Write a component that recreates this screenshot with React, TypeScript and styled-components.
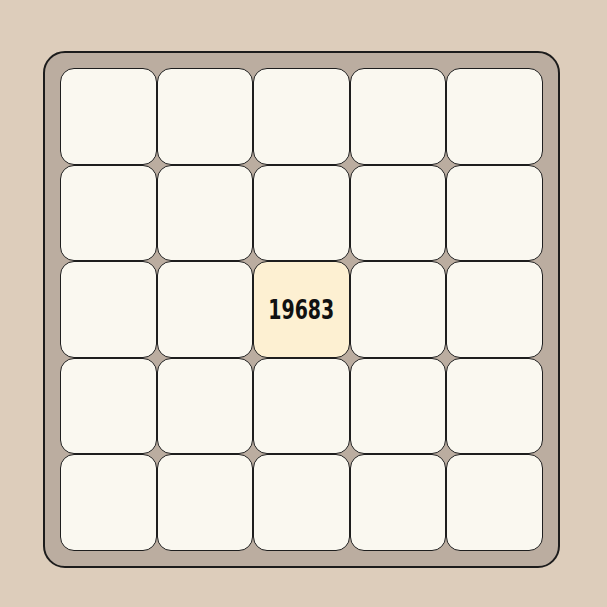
import React from "react";
import styled, { createGlobalStyle } from "styled-components";

const GlobalStyle = createGlobalStyle`
  html, body {
    margin: 0;
    padding: 0;
    background: #ddcdbb;
  }
`;

const Page = styled.div`
  width: 607px;
  height: 607px;
  padding: 51px 0 0 43px;
  box-sizing: border-box;
`;

const Board = styled.div`
  width: 517px;
  height: 517px;
  box-sizing: border-box;
  padding: 15px;
  background: #bbada0;
  border: 2px solid #1c1c1c;
  border-radius: 22px;
  display: grid;
  grid-template-columns: repeat(5, 1fr);
  grid-template-rows: repeat(5, 1fr);
`;

const Cell = styled.div<{ $filled?: boolean }>`
  box-sizing: border-box;
  border: 1px solid #1e1e1e;
  border-radius: 14px;
  background: ${(p) => (p.$filled ? "#fdf0d2" : "#faf8f0")};
  display: flex;
  align-items: center;
  justify-content: center;
`;

const Value = styled.span`
  font-family: "DejaVu Sans Condensed", "DejaVu Sans", sans-serif;
  font-weight: bold;
  font-size: 27px;
  color: #111;
  display: inline-block;
  transform: scaleX(0.78);
`;

const cells: (number | null)[] = Array.from({ length: 25 }, (_, i) =>
  i === 12 ? 19683 : null
);

export default function App() {
  return (
    <>
      <GlobalStyle />
      <Page>
        <Board>
          {cells.map((v, i) => (
            <Cell key={i} $filled={v !== null}>
              {v !== null && <Value>{v}</Value>}
            </Cell>
          ))}
        </Board>
      </Page>
    </>
  );
}
